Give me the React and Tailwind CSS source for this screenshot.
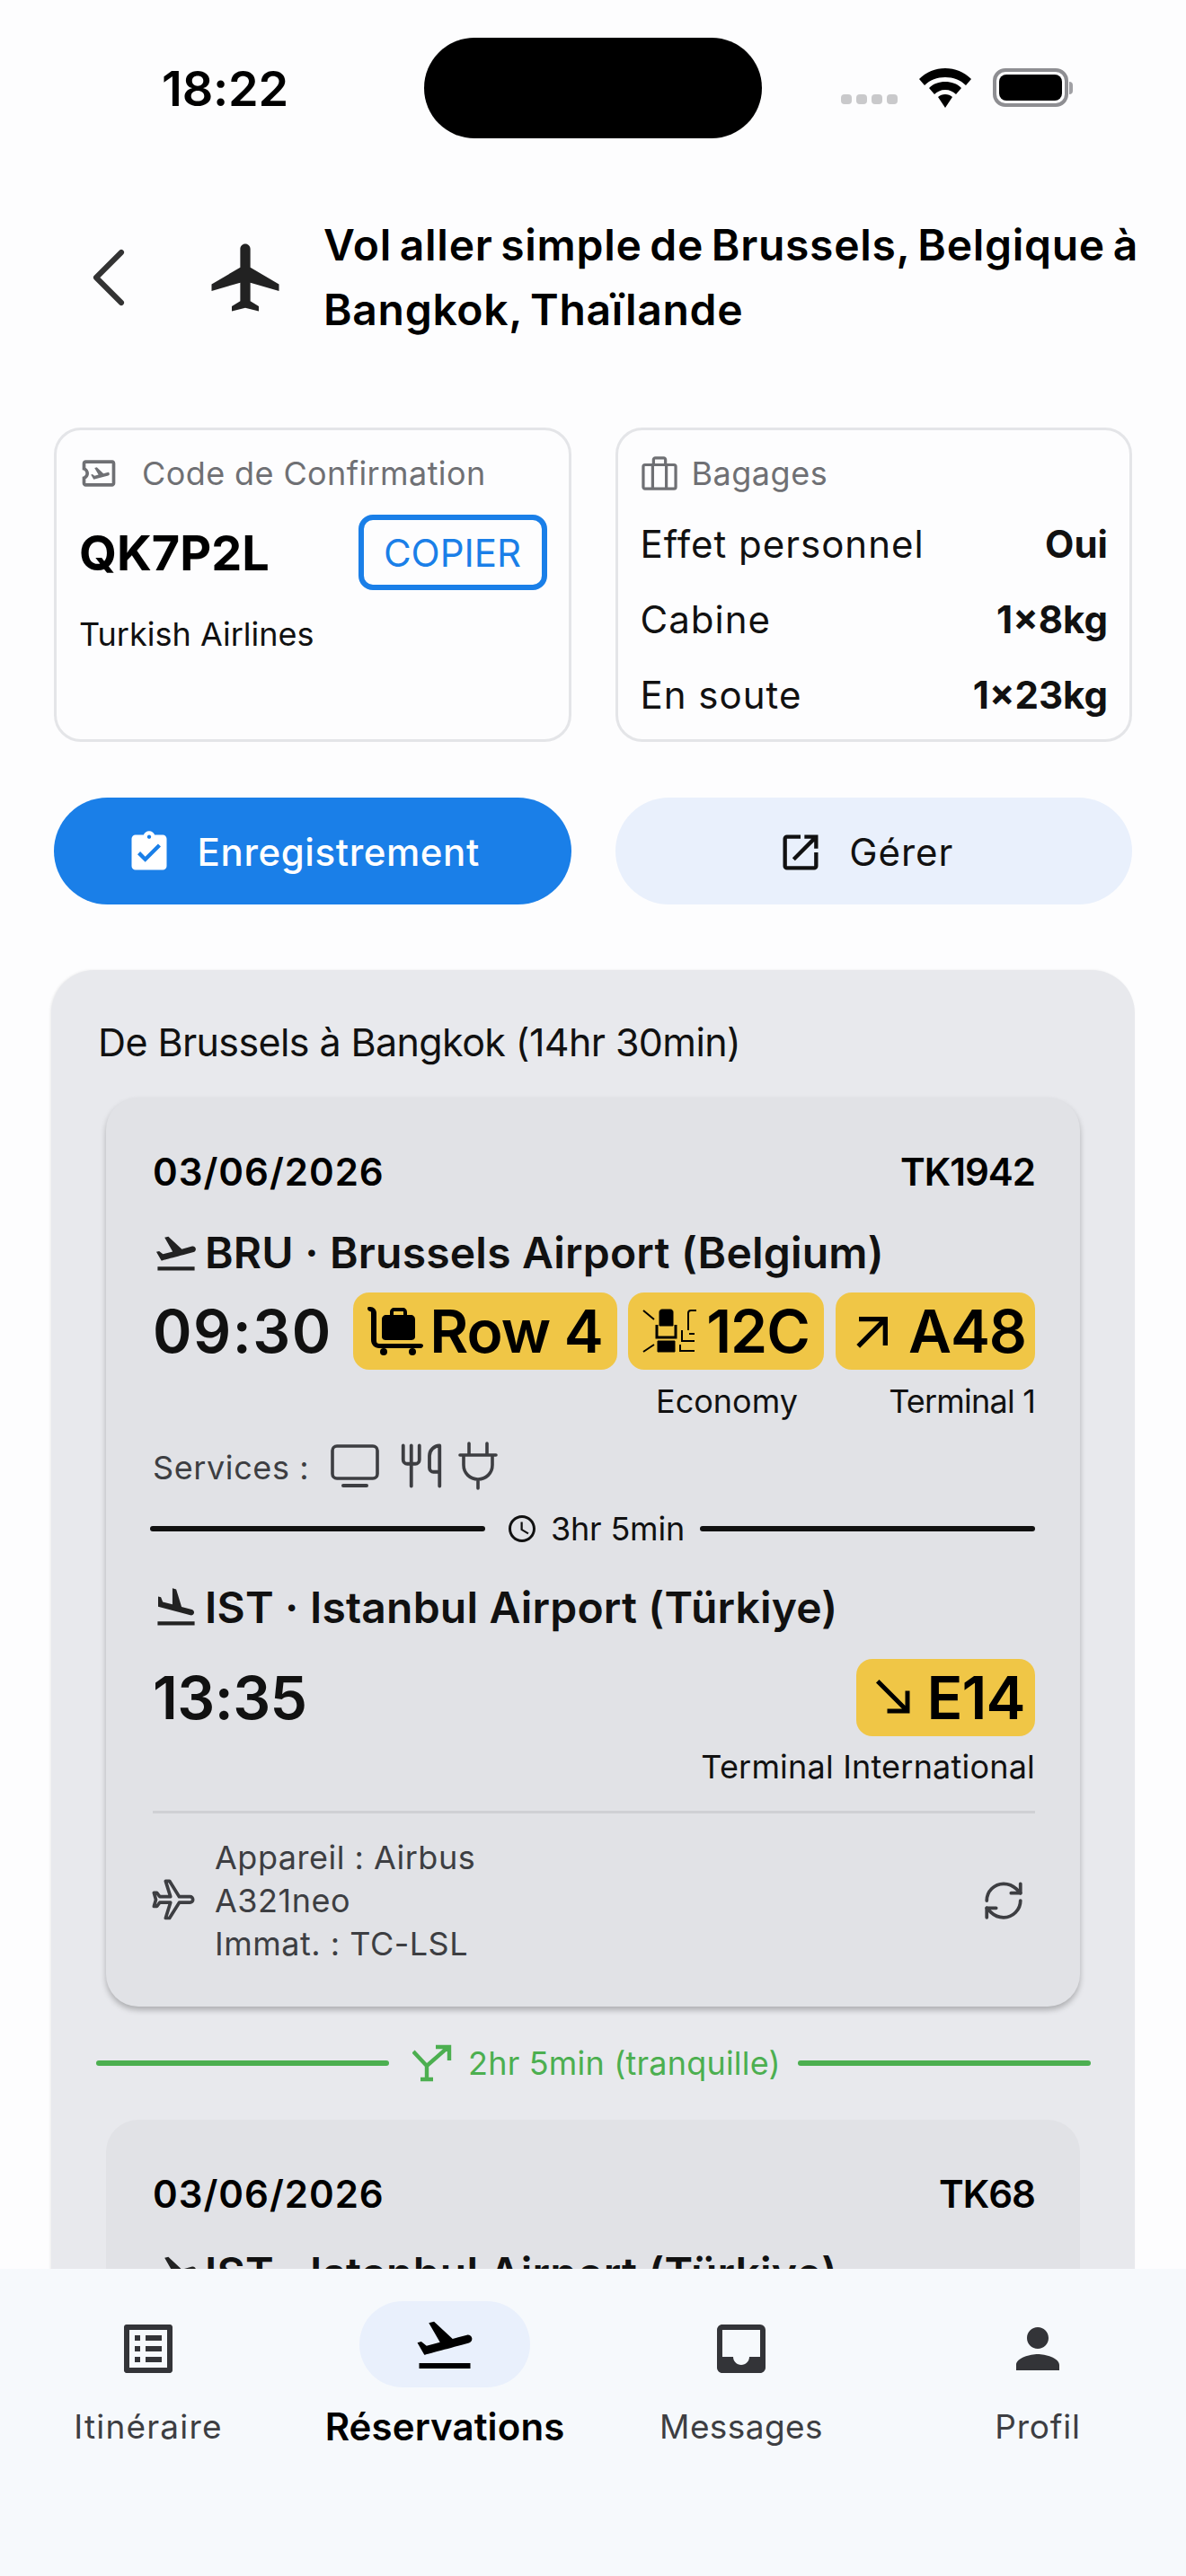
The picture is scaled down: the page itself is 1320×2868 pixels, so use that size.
import {
  MdArrowOutward,
  MdAssignmentTurnedIn,
  MdFlightLand,
  MdFlightTakeoff,
  MdInbox,
  MdListAlt,
  MdLocalAirport,
  MdOpenInNew,
  MdOutlineAirplaneTicket,
  MdOutlineSchedule,
  MdPerson,
  MdSouthEast,
} from "react-icons/md";
import { ChevronLeft, RefreshCw, Utensils } from "lucide-react";

const Wifi = () => (
  <svg viewBox="0 0 58 44" className="w-[58px] h-[44px]" fill="#000">
    <path d="M29 0C18 0 8 4 0 12l6 7c6-6 14-9 23-9s17 3 23 9l6-7C50 4 40 0 29 0z" />
    <path d="M29 15c-7 0-13 2-18 7l6 7c3-3 7-5 12-5s9 2 12 5l6-7c-5-5-11-7-18-7z" />
    <path d="M29 29c-3 0-6 1-8 3l8 12 8-12c-2-2-5-3-8-3z" />
  </svg>
);

const Battery = () => (
  <div className="flex items-center">
    <div className="w-[84px] h-[43px] rounded-[14px] border-[4px] border-[#8e8e92] p-[3px]">
      <div className="w-full h-full rounded-[8px] bg-black"></div>
    </div>
    <div className="w-[4px] h-[14px] ml-[1px] rounded-r-full bg-[#a0a0a4]"></div>
  </div>
);

const Trolley = () => (
  <svg viewBox="0 0 62 54" className="w-[62px] h-[54px] shrink-0" fill="#000">
    <path d="M3 0c4 0 7 3 7 7v31c0 2 1 3 3 3h46c2 0 3 1 3 2s-1 3-3 3H13c-5 0-9-4-9-9V7c0-1 0-2-1-2s-3-1-3-3 1-2 3-2z" />
    <path d="M25 6c0-3 2-5 5-5h9c3 0 5 2 5 5v3h4c3 0 5 2 5 5v19c0 3-2 4-5 4H21c-3 0-5-1-5-4V14c0-3 2-5 5-5h4zm4 3h11V6c0-1 0-1-1-1h-9c-1 0-1 0-1 1z" />
    <circle cx="18" cy="50" r="4" />
    <circle cx="50" cy="50" r="4" />
  </svg>
);

const Seat = () => (
  <svg viewBox="0 0 60 50" className="w-[60px] h-[50px] shrink-0 mr-[4px]" fill="none" stroke="#000">
    <path d="M1 2l12 10M1 48l12-8" strokeWidth="2" />
    <path d="M19 4c0-2 1-3 3-3h9c2 0 3 1 3 3v15H19z" fill="#000" />
    <path d="M16 18v14h21V18" strokeWidth="3" />
    <path d="M17 36h19v12H17z" fill="#000" />
    <path d="M60 2h-6c-2 0-3 1-3 3v19M44 24v12h14M42 40v7h16M52 28h6" strokeWidth="2" />
  </svg>
);

const Transfer = () => (
  <svg viewBox="0 0 44 42" className="w-[44px] h-[42px]" fill="none" stroke="#4caf50" strokeWidth="4.4">
    <path d="M1 8l15 16v15M16 24L40 3M26 3h15v15M9 39h14" />
  </svg>
);

const Briefcase = () => (
  <svg viewBox="0 0 42 40" className="w-[42px] h-[38px]" fill="none" stroke="#6f7074" strokeWidth="3.4">
    <rect x="2" y="10" width="38" height="28" rx="2" />
    <path d="M13 10v28M29 10v28M14 10V4c0-1 1-2 2-2h10c1 0 2 1 2 2v6" />
  </svg>
);

const Monitor = () => (
  <svg viewBox="0 0 54 48" className="w-[54px] h-[48px] shrink-0" fill="none" stroke="#3d3e42" strokeWidth="3.6" strokeLinecap="round">
    <rect x="2" y="2" width="50" height="36" rx="5" />
    <path d="M14 46h26" strokeWidth="4" />
  </svg>
);

const Plug = () => (
  <svg viewBox="0 0 44 54" className="w-[44px] h-[54px] shrink-0" fill="none" stroke="#3d3e42" strokeWidth="3.6" strokeLinecap="round">
    <path d="M12 2v13M32 2v13M2 15h40M6 15v11c0 9 7 16 16 16s16-7 16-16V15M22 42v10" />
  </svg>
);

// outline airliner, the flight shape stroked and turned to face right
const PlaneOutline = () => (
  <svg viewBox="0 0 24 24" className="w-[52px] h-[52px] shrink-0 rotate-90 -ml-[3px]" fill="none" stroke="#3d3e42" strokeWidth="1.7" strokeLinejoin="round">
    <path d="M21 16v-2l-8-5V3.5c0-.83-.67-1.5-1.5-1.5S10 2.67 10 3.5V9l-8 5v2l8-2.5V19l-2 1.5V22l3.5-1 3.5 1v-1.5L13 19v-5.5l8 2.5z" />
  </svg>
);

const Badge = ({ icon, label, className }) => (
  <div className={"h-[86px] rounded-[18px] bg-[#f0c646] flex items-center justify-center gap-[7px] " + className}>
    {icon}
    <span className="text-[66px] leading-none font-semibold tracking-[-1px] text-black">{label}</span>
  </div>
);

const AirportLine = ({ icon, label }) => (
  <div className="flex items-center gap-[6px] h-[66px]">
    {icon}
    <span className="text-[48px] font-semibold tracking-[0.2px] text-[#111] whitespace-nowrap">{label}</span>
  </div>
);

const SegmentHead = ({ flight }) => (
  <div className="flex justify-between items-center h-[60px] text-[42px] font-semibold tracking-[1px] text-black">
    <span>03/06/2026</span>
    <span className="tracking-[-1px]">{flight}</span>
  </div>
);

const NavItem = ({ icon, label, active, labelClass }) => (
  <div className="w-[330px] flex flex-col items-center">
    <div className={"w-[190px] h-[96px] rounded-full flex items-center justify-center " + (active ? "bg-[#e9f0fc] text-black" : "pt-[10px] text-[#333438]")}>
      {icon}
    </div>
    <span className={active ? "mt-[14px] text-[42px] leading-[60px] font-semibold tracking-[0.1px] text-black" : "mt-[14px] text-[37px] leading-[60px] text-[#3d3e42] " + labelClass}>
      {label}
    </span>
  </div>
);

const App = () => {
  return (
    <div className="relative w-[1320px] h-[2868px] overflow-hidden bg-[#fdfdfe] font-['Inter',sans-serif]">
      {/* status bar */}
      <div className="relative flex items-center h-[112px] mt-[42px] pl-[180px]">
        <span className="shrink-0 text-[54px] font-semibold tracking-[-0.2px] text-black w-[292px]">18:22</span>
        <div className="shrink-0 w-[376px] h-[112px] rounded-[56px] bg-black"></div>
        <div className="flex items-end gap-[5px] ml-[88px] mt-[24px]">
          <i className="w-[12px] h-[11px] rounded-[4px] bg-[#c9c9cb]"></i>
          <i className="w-[12px] h-[11px] rounded-[4px] bg-[#c9c9cb]"></i>
          <i className="w-[12px] h-[11px] rounded-[4px] bg-[#c9c9cb]"></i>
          <i className="w-[12px] h-[11px] rounded-[4px] bg-[#c9c9cb]"></i>
        </div>
        <div className="flex items-center gap-[24px] ml-[24px] -mt-[1px]">
          <Wifi />
          <Battery />
        </div>
      </div>

      {/* header */}
      <div className="flex items-center mt-[83px] pl-[65px]">
        <ChevronLeft size={112} strokeWidth={1.3} color="#333" className="shrink-0" />
        <MdLocalAirport size={90} color="#222" className="shrink-0 ml-[51px]" />
        <h1 className="ml-[42px] w-[930px] text-[48px] leading-[72px] font-semibold tracking-[0.7px] [word-spacing:-4px] text-black">
          Vol aller simple de Brussels, Belgique à Bangkok, Thaïlande
        </h1>
      </div>

      {/* info cards */}
      <div className="grid grid-cols-2 gap-[49px] mx-[60px] mt-[95px]">
        <div className="h-[350px] rounded-[30px] border-[3px] border-[#e4e5e8] pl-[25px] pr-[24px] pt-[24px]">
          <div className="flex items-center h-[48px]">
            <MdOutlineAirplaneTicket size={44} color="#6f7074" />
            <span className="ml-[26px] text-[36px] tracking-[0.4px] text-[#6f7074] whitespace-nowrap">Code de Confirmation</span>
          </div>
          <div className="flex items-center justify-between mt-[22px]">
            <span className="text-[54px] font-bold tracking-[0px] text-black">QK7P2L</span>
            <div className="w-[210px] h-[84px] rounded-[16px] border-[6px] border-[#1a7fe8] flex items-center justify-center text-[42px] text-[#1a7fe8]">
              COPIER
            </div>
          </div>
          <p className="mt-[24px] text-[36px] leading-[50px] text-[#111]">Turkish Airlines</p>
        </div>
        <div className="h-[350px] rounded-[30px] border-[3px] border-[#e4e5e8] pl-[25px] pr-[24px] pt-[24px]">
          <div className="flex items-center h-[48px]">
            <Briefcase />
            <span className="ml-[15px] text-[36px] tracking-[0.5px] text-[#6f7074]">Bagages</span>
          </div>
          <div className="mt-[25px] flex flex-col gap-[24px] text-[42px] leading-[60px] text-[#111]">
            <div className="flex justify-between"><span className="tracking-[1px]">Effet personnel</span><b className="font-bold">Oui</b></div>
            <div className="flex justify-between"><span className="tracking-[1px]">Cabine</span><b className="font-bold">1×8kg</b></div>
            <div className="flex justify-between"><span className="tracking-[1px]">En soute</span><b className="font-bold">1×23kg</b></div>
          </div>
        </div>
      </div>

      {/* actions */}
      <div className="grid grid-cols-2 gap-[49px] mx-[60px] mt-[62px]">
        <div className="h-[119px] rounded-full bg-[#1a7fe8] flex items-center justify-center gap-[28px] text-white text-[42px] font-medium tracking-[0.6px] pr-[22px] pt-[2px]">
          <MdAssignmentTurnedIn size={52} />
          <span>Enregistrement</span>
        </div>
        <div className="h-[119px] rounded-full bg-[#e9f0fc] flex items-center justify-center gap-[28px] text-[#111] text-[42px] tracking-[1px] pr-[18px] pt-[2px]">
          <MdOpenInNew size={52} />
          <span>Gérer</span>
        </div>
      </div>

      {/* itinerary panel */}
      <div className="mx-[57px] mt-[73px] rounded-[48px] bg-[#e8e9ed] pt-[50px] pb-[60px] shadow-[-1px_0_3px_rgba(0,0,0,0.08)]">
        <p className="pl-[52px] text-[43px] leading-[60px] tracking-[-0.6px] text-[#111]">De Brussels à Bangkok (14hr 30min)</p>

        <div className="mx-[61px] mt-[32px] rounded-[36px] bg-[#e1e2e6] pt-[52px] pb-[46px] pl-[52px] pr-[50px] shadow-[0_4px_6px_rgba(0,0,0,0.25)]">
          <SegmentHead flight="TK1942" />
          <div className="mt-[28px]">
            <AirportLine icon={<MdFlightTakeoff size={52} color="#222" />} label="BRU · Brussels Airport (Belgium)" />
          </div>
          <div className="flex items-center mt-[11px]">
            <span className="w-[223px] text-[66px] leading-none font-semibold tracking-[1.5px] text-[#111]">09:30</span>
            <Badge className="w-[294px]" icon={<Trolley />} label="Row 4" />
            <Badge className="w-[218px] ml-[12px]" icon={<Seat />} label="12C" />
            <Badge className="w-[222px] ml-[13px]" icon={<MdArrowOutward size={64} />} label="A48" />
          </div>
          <div className="flex mt-[11px] h-[48px] text-[36px] leading-[48px] text-[#111]">
            <span className="ml-[560px]">Economy</span>
            <span className="ml-auto tracking-[-0.8px]">Terminal 1</span>
          </div>
          <div className="flex items-center mt-[22px] h-[56px] text-[36px] text-[#3d3e42]">
            <span className="tracking-[0.6px]">Services :</span>
            <div className="ml-[24px] -mt-[4px] flex items-center">
              <Monitor />
              <Utensils size={54} strokeWidth={1.7} className="ml-[20px]" />
              <div className="ml-[14px]"><Plug /></div>
            </div>
          </div>
          <div className="flex items-center mt-[20px] h-[40px] -ml-[3px]">
            <div className="w-[373px] h-[6px] rounded-full bg-[#111]"></div>
            <MdOutlineSchedule size={36} color="#111" className="ml-[23px]" />
            <span className="ml-[14px] text-[36px] tracking-[-0.2px] text-[#111] whitespace-nowrap">3hr 5min</span>
            <div className="ml-auto w-[373px] h-[6px] rounded-full bg-[#111]"></div>
          </div>
          <div className="mt-[35px]">
            <AirportLine icon={<MdFlightLand size={52} color="#222" />} label="IST · Istanbul Airport (Türkiye)" />
          </div>
          <div className="flex items-center justify-between mt-[24px]">
            <span className="text-[66px] leading-none font-semibold tracking-[-0.6px] text-[#111]">13:35</span>
            <Badge className="w-[199px]" icon={<MdSouthEast size={60} />} label="E14" />
          </div>
          <p className="mt-[10px] h-[48px] text-right text-[36px] leading-[48px] tracking-[0.2px] text-[#111]">Terminal International</p>
          <div className="mt-[25px] h-[3px] bg-[#cfd0d4]"></div>
          <div className="flex items-center mt-[25px]">
            <PlaneOutline />
            <p className="ml-[20px] w-[340px] text-[36px] leading-[48px] tracking-[0.5px] text-[#3d3e42]">
              Appareil : Airbus<br />A321neo<br />Immat. : TC-LSL
            </p>
            <RefreshCw size={50} strokeWidth={1.8} color="#3d3e42" className="ml-auto mr-[10px]" />
          </div>
        </div>

        <div className="flex items-center mt-[43px] mx-[2px] h-[40px]">
          <div className="ml-[48px] w-[326px] h-[6px] rounded-full bg-[#4caf50]"></div>
          <div className="ml-[26px]"><Transfer /></div>
          <span className="ml-[18px] text-[36px] tracking-[0.2px] text-[#4caf50] whitespace-nowrap">2hr 5min (tranquille)</span>
          <div className="ml-auto mr-[47px] w-[326px] h-[6px] rounded-full bg-[#4caf50]"></div>
        </div>

        <div className="mx-[61px] mt-[43px] rounded-[36px] bg-[#e1e2e6] pt-[52px] pb-[46px] pl-[52px] pr-[50px]">
          <SegmentHead flight="TK68" />
          <div className="mt-[26px]">
            <AirportLine icon={<MdFlightTakeoff size={52} color="#222" />} label="IST · Istanbul Airport (Türkiye)" />
          </div>
        </div>
      </div>

      {/* bottom nav */}
      <nav className="absolute left-0 right-0 bottom-0 h-[342px] bg-[#f6f9fc] flex pt-[36px]">
        <NavItem icon={<MdListAlt size={72} />} label="Itinéraire" labelClass="tracking-[1.2px]" />
        <NavItem active icon={<MdFlightTakeoff size={72} />} label="Réservations" />
        <NavItem icon={<MdInbox size={72} />} label="Messages" labelClass="tracking-[0.4px]" />
        <NavItem icon={<MdPerson size={72} />} label="Profil" labelClass="tracking-[0.8px]" />
      </nav>
    </div>
  );
};

export default App;
